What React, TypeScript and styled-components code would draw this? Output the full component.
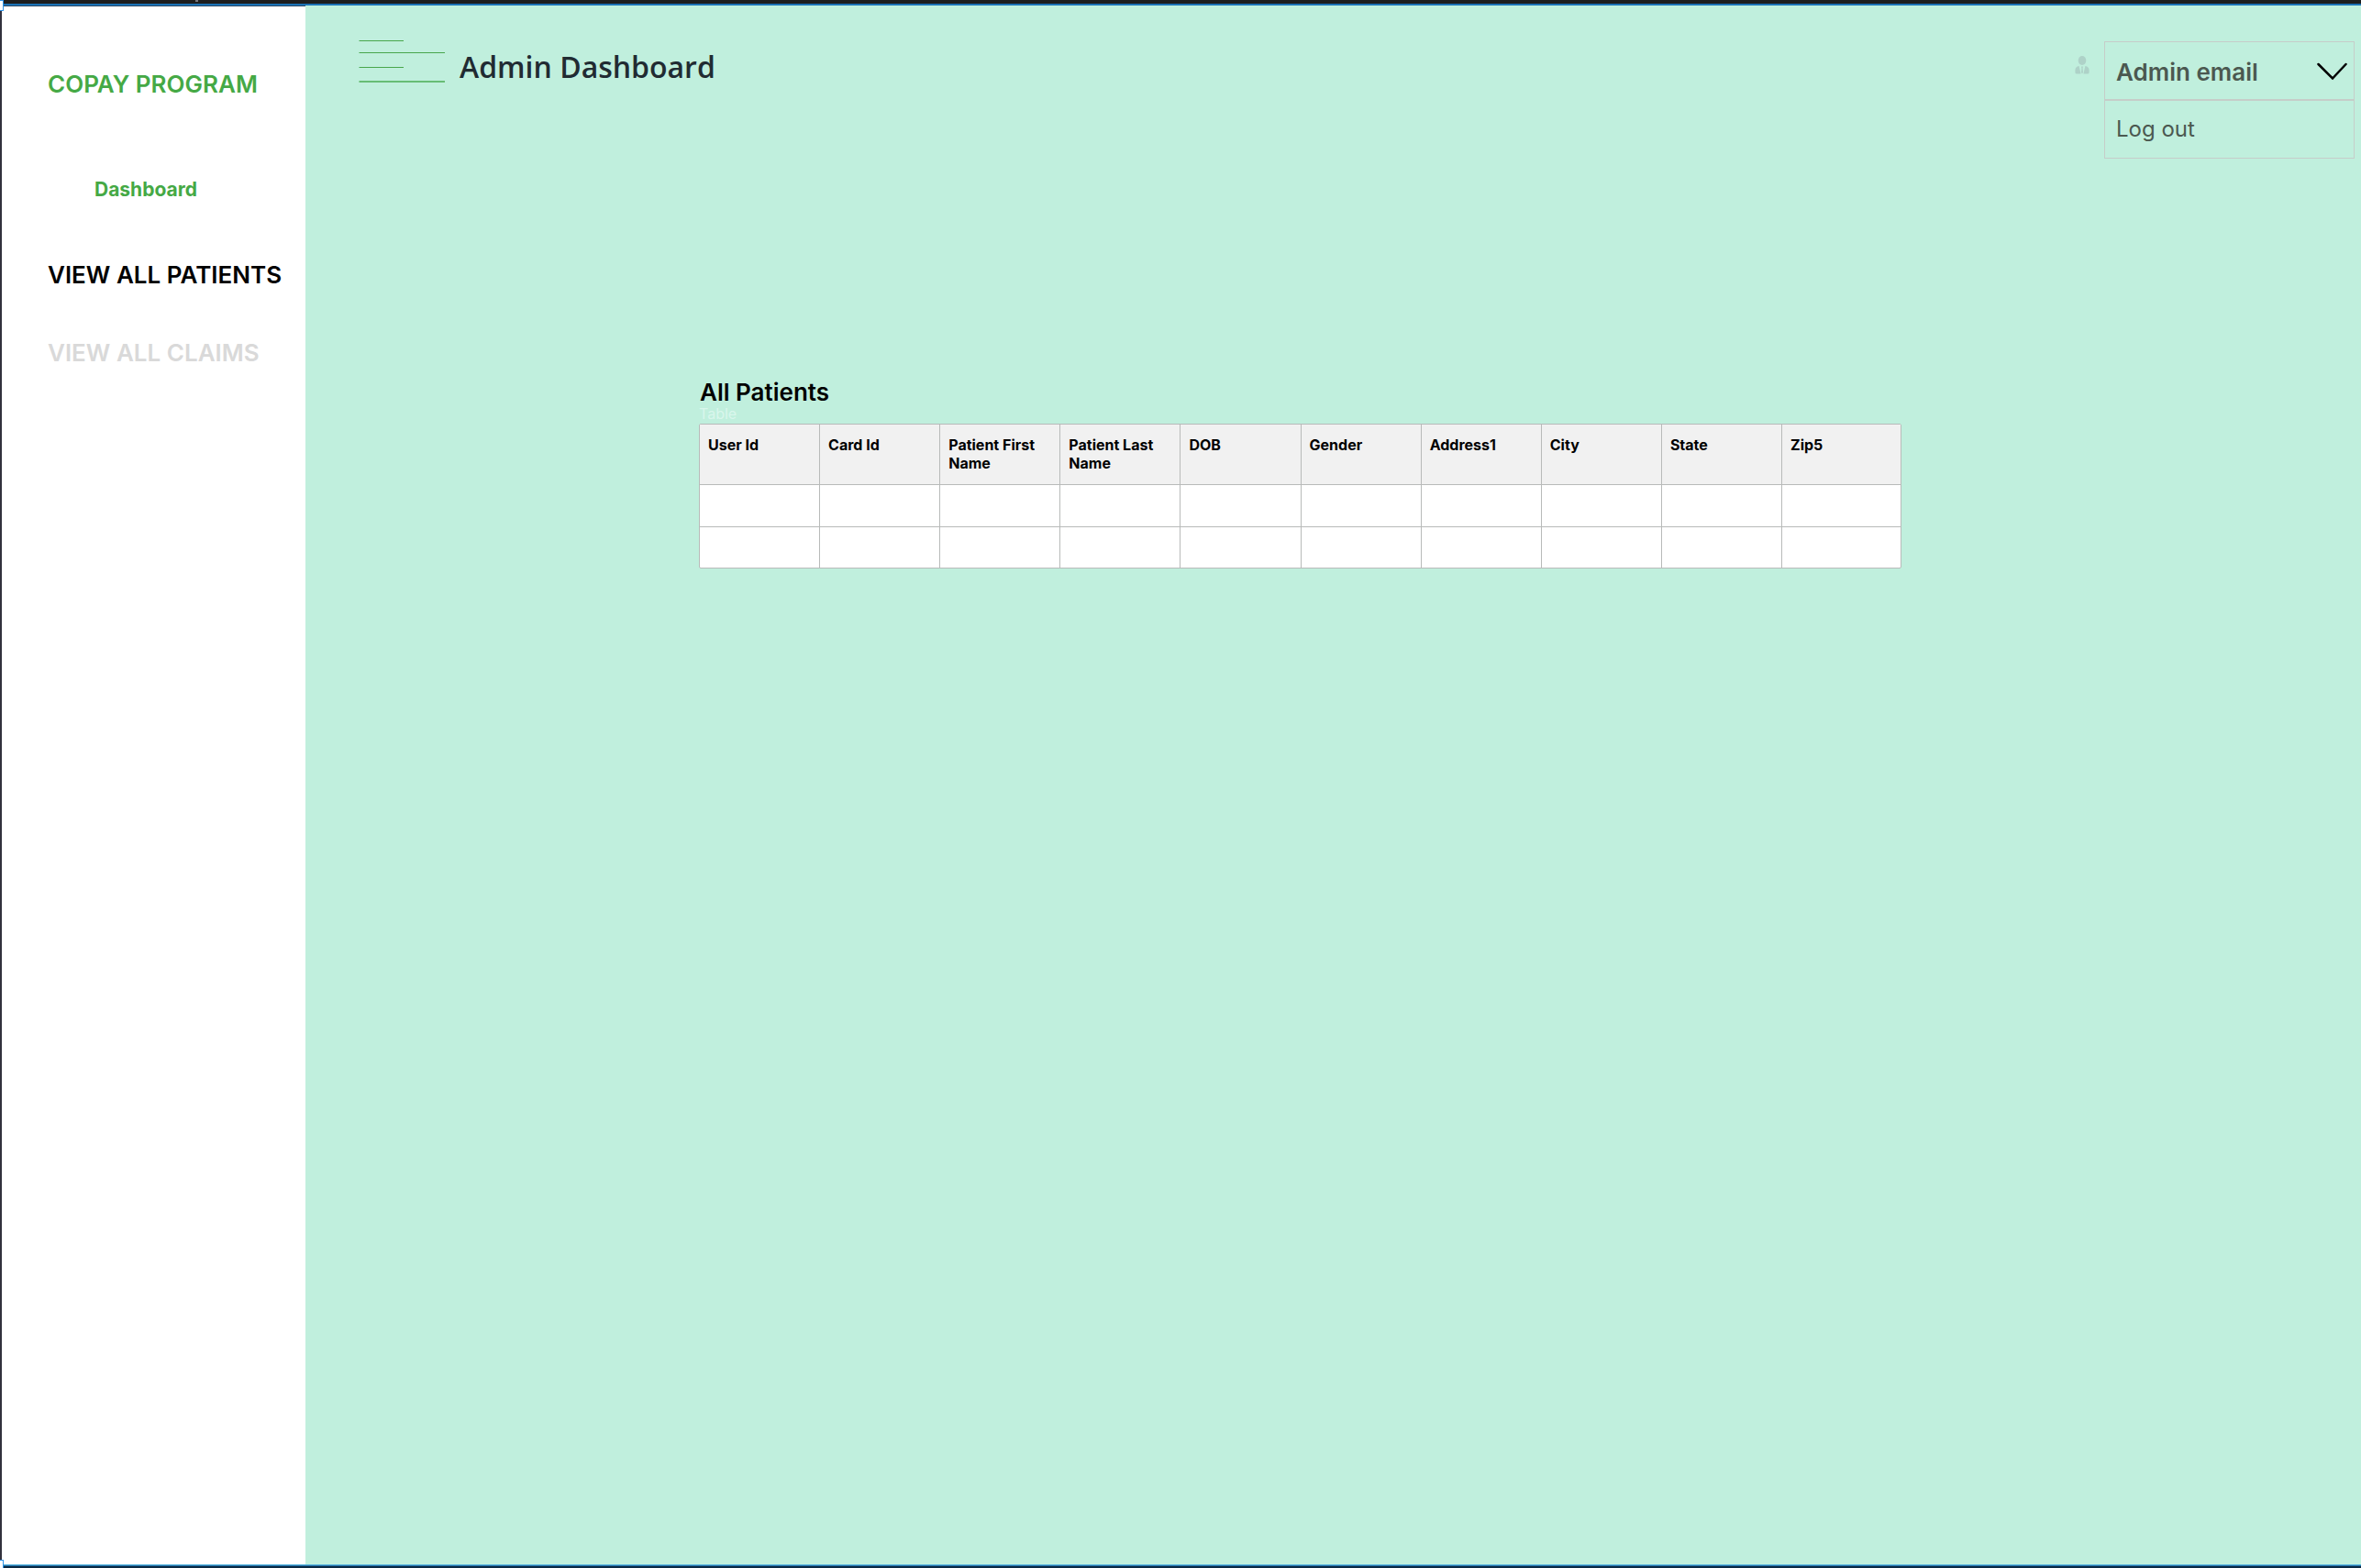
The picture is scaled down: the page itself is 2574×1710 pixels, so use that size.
import React, { useState } from "react";
import styled, { createGlobalStyle } from "styled-components";

const sans = `Inter, "Liberation Sans", sans-serif`;

const GlobalStyle = createGlobalStyle`
  * { box-sizing: border-box; }
  body { margin: 0; background: #c0efdd; font-family: ${sans}; }
  button { font: inherit; color: inherit; background: none; border: 0; padding: 0; cursor: pointer; }
`;

const Frame = styled.div`
  position: relative;
  display: flex;
  flex-direction: column;
  min-height: 100vh;
`;

const TopEdge = styled.div`
  height: 6px;
  padding-left: 213px;
  background: #1e1e1e;
  border-bottom: 2px solid #1b72b5;
`;

const Tick = styled.div`
  width: 3px;
  height: 2px;
  background: #77777c;
`;

const BottomEdge = styled.div`
  height: 4px;
  background: #0b2a45;
  border-top: 1px solid #58b4dc;
  box-shadow: inset 0 1px #2470a8;
`;

const Handle = styled.div<{ $end: "top" | "bottom" }>`
  position: absolute;
  left: 0;
  ${(p) => p.$end}: 0;
  width: 4px;
  height: ${(p) => (p.$end === "top" ? 12 : 9)}px;
  background: #ffffff;
  border: 1px solid #2f93e6;
  border-left: 0;
  border-${(p) => p.$end}: ${(p) => (p.$end === "top" ? "1px solid #2f93e6" : "0")};
`;

const Body = styled.div`
  display: flex;
  flex: 1;
`;

const Sidebar = styled.aside`
  flex: 0 0 333px;
  padding: 69px 0 0 50px;
  background: #ffffff;
  border-left: 2px solid #32313d;
  border-top: 1px solid #2b4a68;
`;

const Brand = styled.div`
  margin-bottom: 87px;
  font-size: 26px;
  font-weight: 600;
  line-height: 32px;
  color: #45a945;
`;

const Nav = styled.nav`
  display: flex;
  flex-direction: column;
  align-items: flex-start;
  white-space: nowrap;
`;

const HomeLink = styled.a`
  margin: 0 0 65px 51px;
  font-size: 21px;
  font-weight: 700;
  line-height: 24px;
  color: #45a945;
  text-decoration: none;
`;

const NavLink = styled.a<{ $muted?: boolean }>`
  margin-bottom: 53px;
  font-size: 26px;
  font-weight: 600;
  line-height: 32px;
  color: ${(p) => (p.$muted ? "#d9d9d9" : "#000000")};
  text-decoration: none;
`;

const Main = styled.main`
  flex: 1;
  min-width: 0;
  background: #c0efdd;
`;

const Header = styled.header`
  display: flex;
  align-items: flex-start;
  height: 407px;
  padding: 36px 7px 0 58px;
`;

const MenuToggle = styled.button`
  display: block;
  width: 94px;
  height: 50px;
  svg { display: block; }
`;

const Title = styled.h1`
  flex: 1;
  margin: 10px 0 0 16px;
  font-family: "Open Sans", "Noto Sans", sans-serif;
  font-size: 32px;
  font-weight: 600;
  line-height: 42px;
  color: #212b32;
`;

const Account = styled.div`
  display: flex;
  align-items: flex-start;
  gap: 16px;
  padding-top: 3px;
`;

const Avatar = styled.svg`
  display: block;
  margin-top: 16px;
`;

const Menu = styled.div`
  width: 273px;
  border: 1px solid #c6cdc9;
  color: #4b5850;
`;

const MenuButton = styled.button`
  display: flex;
  align-items: center;
  justify-content: space-between;
  width: 100%;
  height: 64px;
  padding: 2px 7px 0 12px;
  border-bottom: 2px solid #c6cdc9;
  font-size: 26px;
  font-weight: 600;
`;

const MenuItem = styled.button`
  display: block;
  width: 100%;
  height: 62px;
  padding: 0 12px 2px;
  font-size: 24px;
  font-weight: 400;
  text-align: left;
`;

const Patients = styled.section`
  padding: 0 501px 0 429px;
`;

const SectionTitle = styled.h2`
  margin: 0;
  padding-left: 1px;
  font-size: 26px;
  font-weight: 600;
  line-height: 30px;
  color: #000000;
`;

const Table = styled.table`
  width: 100%;
  table-layout: fixed;
  border-spacing: 0;
  border: 1px solid #b8bab9;
  border-radius: 2px;
  background: #ffffff;
`;

const Caption = styled.caption`
  padding-bottom: 3px;
  font-size: 16px;
  line-height: 16px;
  text-align: left;
  color: #d9f6ec;
`;

const HeadCell = styled.th`
  height: 66px;
  padding: 12px 9px;
  border-right: 1px solid #b8bab9;
  border-bottom: 1px solid #b8bab9;
  background: #f1f1f1;
  font-size: 16px;
  font-weight: 700;
  line-height: 20px;
  text-align: left;
  vertical-align: top;
  color: #000000;
  &:last-child { width: 129px; border-right: 0; }
`;

const Cell = styled.td`
  height: 46px;
  padding: 0 9px;
  border-right: 1px solid #b8bab9;
  border-bottom: 1px solid #b8bab9;
  &:last-child { border-right: 0; }
  tr:last-child > & { height: 44px; border-bottom: 0; }
`;

const columns = [
  "User Id", "Card Id", "Patient First Name", "Patient Last Name", "DOB",
  "Gender", "Address1", "City", "State", "Zip5",
];
const rows = [0, 1];

export default function App() {
  const [open, setOpen] = useState(true);
  return (
    <Frame>
      <GlobalStyle />
      <TopEdge><Tick /></TopEdge>
      <Body>
        <Sidebar>
          <Brand>COPAY PROGRAM</Brand>
          <Nav aria-label="Main">
            <HomeLink href="#dashboard">Dashboard</HomeLink>
            <NavLink href="#patients" aria-current="page">VIEW ALL PATIENTS</NavLink>
            <NavLink href="#claims" $muted>VIEW ALL CLAIMS</NavLink>
          </Nav>
        </Sidebar>
        <Main>
          <Header>
            <MenuToggle type="button" aria-label="Toggle navigation">
              <svg width="94" height="50" viewBox="0 0 94 50" stroke="#48a64c" fill="none">
                <path d="M0.5 2.5H49M0.5 15.5H94M0.5 31.5H49" />
                <path d="M0.5 47H94" strokeWidth="2" stroke="#67bd75" />
              </svg>
            </MenuToggle>
            <Title>Admin Dashboard</Title>
            <Account>
              <Avatar width="16" height="20" viewBox="0 0 16 20" fill="#aed2c8" aria-hidden="true">
                <ellipse cx="8" cy="5" rx="4.3" ry="4.9" />
                <path d="M4.6 11 6.6 19.5H2Q.4 19.5.4 18V15.500Q.5 11.600 4.600 11ZM11.400 11 9.400 19.500H14Q15.600 19.500 15.600 18V15.500Q15.500 11.600 11.400 11ZM7 11.500H9L8.600 13.500 9 18 8 19.500 7 18 7.400 13.500Z" />
              </Avatar>
              <Menu>
                <MenuButton type="button" aria-expanded={open} onClick={() => setOpen(!open)}>
                  Admin email
                  <svg width="33" height="20" viewBox="0 0 33 20" fill="none" stroke="#000" strokeWidth="2.500" strokeLinecap="round">
                    <path d="M1.500 2 17 17.500 31.500 2" />
                  </svg>
                </MenuButton>
                {open && <MenuItem type="button">Log out</MenuItem>}
              </Menu>
            </Account>
          </Header>
          <Patients>
            <SectionTitle>All Patients</SectionTitle>
            <Table>
              <Caption>Table</Caption>
              <thead>
                <tr>{columns.map((c) => <HeadCell key={c} scope="col">{c}</HeadCell>)}</tr>
              </thead>
              <tbody>
                {rows.map((r) => (
                  <tr key={r}>{columns.map((c) => <Cell key={c} />)}</tr>
                ))}
              </tbody>
            </Table>
          </Patients>
        </Main>
      </Body>
      <BottomEdge />
      <Handle $end="top" />
      <Handle $end="bottom" />
    </Frame>
  );
}
